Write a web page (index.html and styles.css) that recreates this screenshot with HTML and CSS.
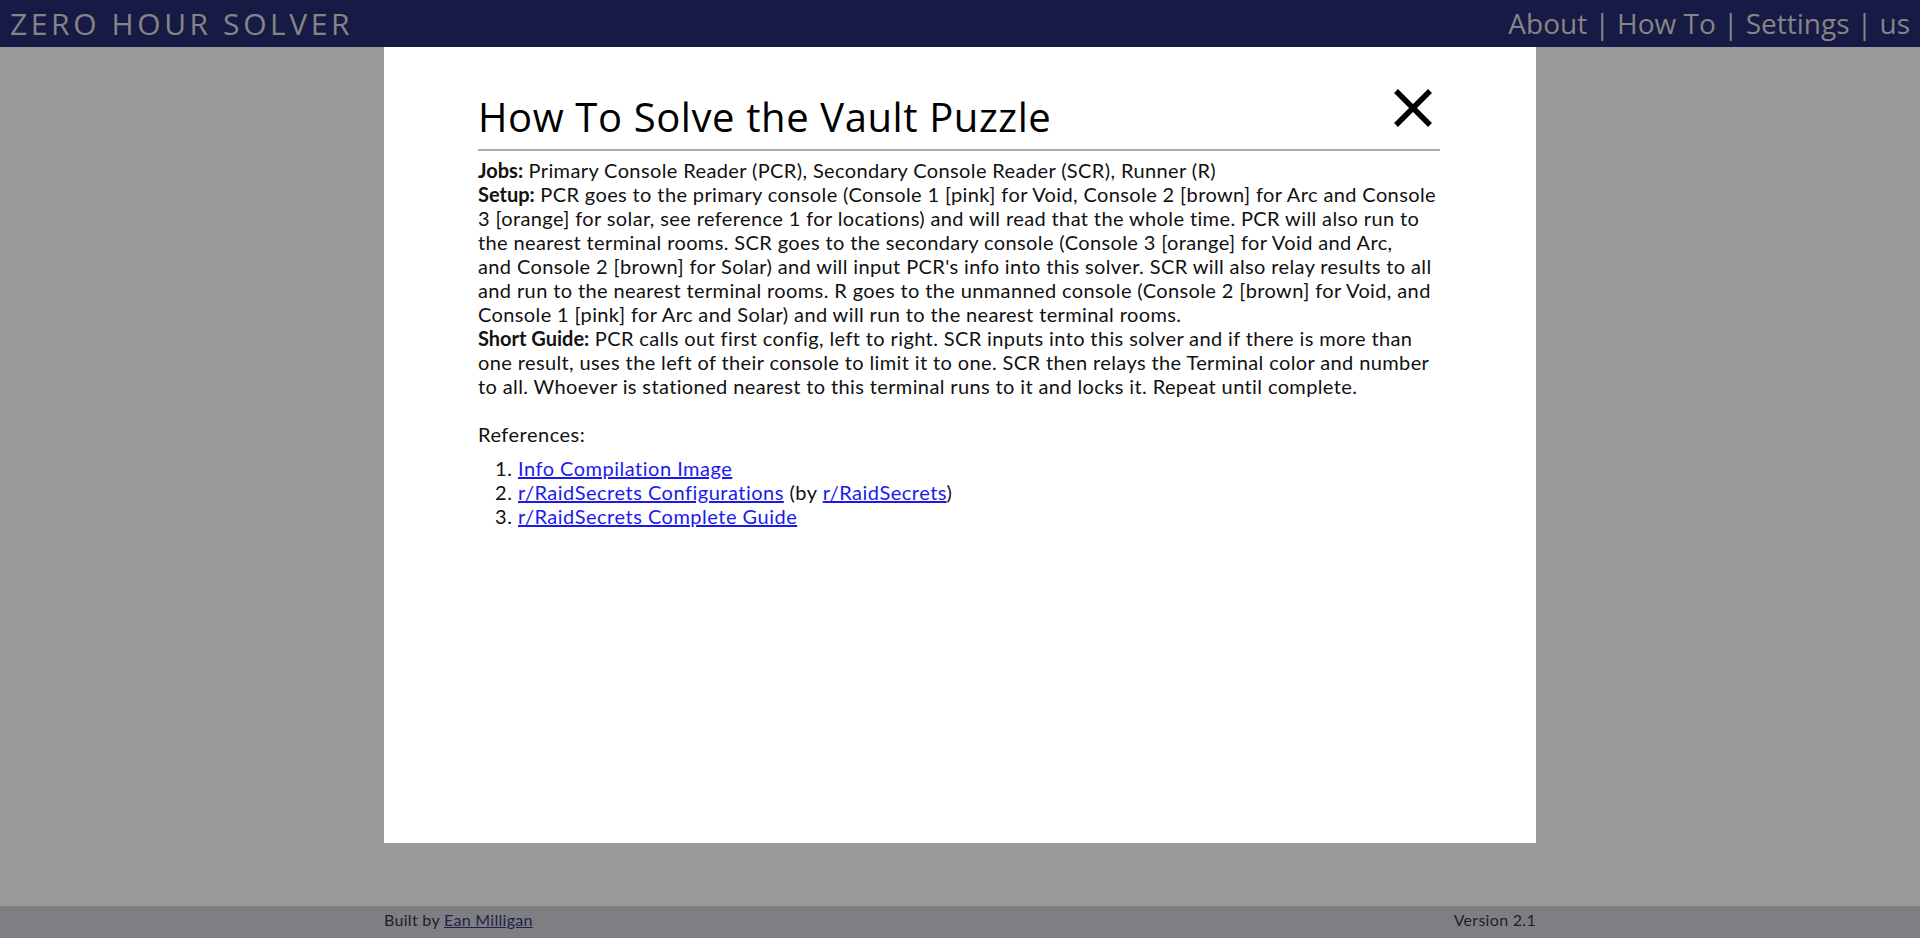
FILE: index.html
```html
<!DOCTYPE html>
<html lang="en">
<head>
<meta charset="utf-8">
<title>Zero Hour Solver</title>
<link rel="stylesheet" href="styles.css">
</head>
<body>
<header class="topbar">
  <div class="brand">ZERO HOUR SOLVER</div>
  <nav class="nav">About | How To | Settings | us</nav>
</header>
<main class="stage">
  <section class="modal">
    <div class="modal-head">
      <h2 class="modal-title">How To Solve the Vault Puzzle</h2>
      <button class="close" aria-label="Close">
        <svg width="40" height="40" viewBox="0 0 40 40"><path d="M3 3 L37 37 M37 3 L3 37" stroke="#000" stroke-width="5.5" fill="none"/></svg>
      </button>
    </div>
    <div class="rule"></div>
    <p class="guide"><b>Jobs:</b> Primary Console Reader (PCR), Secondary Console Reader (SCR), Runner (R)<br><b>Setup:</b> PCR goes to the primary console (Console 1 [pink] for Void, Console 2 [brown] for Arc and Console 3 [orange] for solar, see reference 1 for locations) and will read that the whole time. PCR will also run to the nearest terminal rooms. SCR goes to the secondary console (Console 3 [orange] for Void and Arc,<br>and Console 2 [brown] for Solar) and will input PCR's info into this solver. SCR will also relay results to all and run to the nearest terminal rooms. R goes to the unmanned console (Console 2 [brown] for Void, and Console 1 [pink] for Arc and Solar) and will run to the nearest terminal rooms.<br><b>Short Guide:</b> PCR calls out first config, left to right. SCR inputs into this solver and if there is more than one result, uses the left of their console to limit it to one. SCR then relays the Terminal color and number to all. Whoever is stationed nearest to this terminal runs to it and locks it. Repeat until complete.</p>
    <p class="refs-label">References:</p>
    <ol class="refs">
      <li><a href="#">Info Compilation Image</a></li>
      <li><a href="#">r/RaidSecrets Configurations</a> (by <a href="#">r/RaidSecrets</a>)</li>
      <li><a href="#">r/RaidSecrets Complete Guide</a></li>
    </ol>
  </section>
</main>
<footer class="footer">
  <div class="footer-inner">
    <span>Built by <a class="author" href="#">Ean Milligan</a></span>
    <span>Version 2.1</span>
  </div>
</footer>
</body>
</html>
```

FILE: styles.css
```css
html, body {
  margin: 0;
  padding: 0;
  height: 100%;
}
body {
  display: flex;
  flex-direction: column;
  background: #999999;
  font-family: "Lato", "Liberation Sans", sans-serif;
  overflow: hidden;
}
.topbar {
  height: 47px;
  flex: 0 0 47px;
  background: #171a45;
  color: #858585;
  display: flex;
  justify-content: space-between;
  align-items: center;
  padding: 0 10px;
  font-family: "Open Sans", "Liberation Sans", sans-serif;
}
.brand {
  font-size: 30px;
  letter-spacing: 3.6px;
  line-height: 47px;
}
.nav {
  font-size: 28px;
  line-height: 47px;
}
.stage {
  flex: 1 1 auto;
  display: flex;
  justify-content: center;
  align-items: flex-start;
}
.modal {
  width: 1152px;
  height: 796px;
  box-sizing: border-box;
  background: #ffffff;
  padding: 24px 96px 0 94px;
  color: #111;
}
.modal-head {
  display: flex;
  justify-content: space-between;
  align-items: flex-start;
}
.modal-title {
  margin: 17px 0 0 0;
  font-family: "Open Sans", "Liberation Sans", sans-serif;
  font-weight: 400;
  font-size: 40px;
  letter-spacing: 0.6px;
  line-height: 58px;
  color: #000;
}
.close {
  border: 0;
  background: none;
  padding: 0;
  margin: 17px 7px 0 0;
  width: 40px;
  height: 40px;
  cursor: pointer;
}
.close svg {
  display: block;
}
.rule {
  height: 2px;
  background: #a9a9a9;
  margin-top: 3px;
}
.guide {
  margin: 7px 0 0 0;
  font-size: 20px;
  line-height: 24px;
  letter-spacing: 0.38px;
}
.guide b {
  font-weight: 700;
  letter-spacing: 0;
}
.refs-label {
  margin: 24px 0 0 0;
  font-size: 20px;
  line-height: 24px;
  letter-spacing: 0.5px;
}
.refs {
  margin: 10px 0 0 0;
  padding-left: 40px;
  font-size: 20px;
  line-height: 24px;
  letter-spacing: 0.5px;
}
.refs a {
  color: #1a1aee;
}
.footer {
  flex: 0 0 33px;
  background: #7f7e83;
  margin-top: 63px;
}
.footer-inner {
  width: 1152px;
  margin: 0 auto;
  display: flex;
  justify-content: space-between;
  align-items: center;
  height: 33px;
  box-sizing: border-box;
  padding-bottom: 6px;
  font-size: 16px;
  letter-spacing: 0.3px;
  color: #1e1e26;
}
.author {
  color: #20224a;
}
```
